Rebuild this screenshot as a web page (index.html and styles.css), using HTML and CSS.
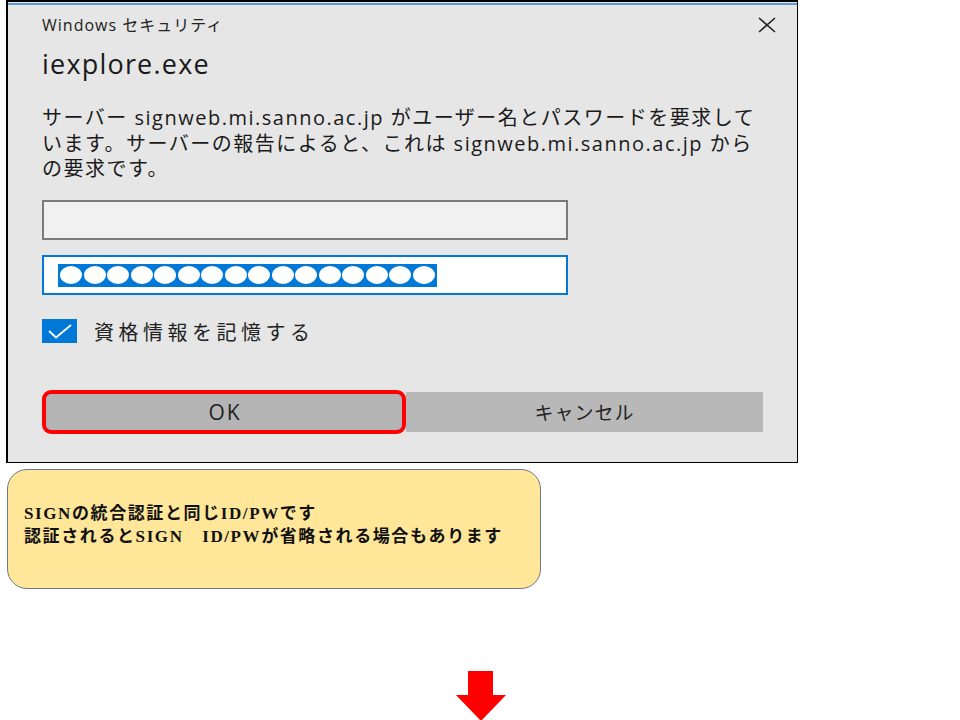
FILE: index.html
```html
<!DOCTYPE html>
<html lang="ja">
<head>
    <meta charset="UTF-8">
    <title>Windows セキュリティ</title>
    <link rel="stylesheet" href="styles.css">
</head>
<body>
    <div class="dialog">
        <div class="accent-line"></div>

        <div class="title-row">
            <span class="dialog-caption">Windows セキュリティ</span>
            <svg class="close-icon" width="18" height="16" viewBox="0 0 18 16">
                <path d="M1 1 L17 15 M17 1 L1 15" stroke="#222" stroke-width="1.6" fill="none"/>
            </svg>
        </div>

        <h1 class="app-name">iexplore.exe</h1>

        <p class="message">
            サーバー signweb.mi.sanno.ac.jp がユーザー名とパスワードを要求して<br>
            います。サーバーの報告によると、これは signweb.mi.sanno.ac.jp から<br>
            の要求です。
        </p>

        <div class="field field-user"></div>
        <div class="field field-pass">
            <div class="selection">
                <span class="dot"></span><span class="dot"></span><span class="dot"></span><span class="dot"></span>
                <span class="dot"></span><span class="dot"></span><span class="dot"></span><span class="dot"></span>
                <span class="dot"></span><span class="dot"></span><span class="dot"></span><span class="dot"></span>
                <span class="dot"></span><span class="dot"></span><span class="dot"></span><span class="dot"></span>
            </div>
        </div>

        <label class="remember">
            <svg class="checkbox" width="35" height="24" viewBox="0 0 35 24">
                <rect width="35" height="24" fill="#0078d7"/>
                <path d="M7 12 L14 18.5 L29 6" stroke="#fff" stroke-width="1.8" fill="none"/>
            </svg>
            <span>資格情報を記憶する</span>
        </label>

        <div class="buttons">
            <div class="btn btn-ok">OK</div>
            <div class="btn btn-cancel">キャンセル</div>
        </div>
    </div>

    <div class="note">
        <p>SIGNの統合認証と同じID/PWです</p>
        <p>認証されるとSIGN　ID/PWが省略される場合もあります</p>
    </div>

    <div class="arrow-row">
        <svg width="52" height="50" viewBox="0 0 52 50">
            <path d="M13 0 H38 V24 H51 L26 50 L1 24 H13 Z" fill="#ff0000"/>
        </svg>
    </div>
</body>
</html>
```

FILE: styles.css
```css
* {
    margin: 0;
    padding: 0;
    box-sizing: border-box;
}

body {
    background: #ffffff;
    font-family: 'Open Sans', 'Noto Sans CJK JP', sans-serif;
    color: #1a1a1a;
    width: 960px;
    height: 720px;
    overflow: hidden;
}

.dialog {
    margin-left: 6px;
    width: 792px;
    height: 463px;
    background: #e6e6e6;
    border: 1px solid #000;
    border-left-width: 2px;
    border-top-width: 2px;
    padding: 0 34px 0 34px;
}

.accent-line {
    height: 2px;
    margin: 1px -34px 0 -34px;
    background: #5b9bd5;
}

.title-row {
    display: flex;
    justify-content: space-between;
    align-items: center;
    height: 28px;
    margin-top: 5px;
}

.dialog-caption {
    font-size: 16px;
    letter-spacing: 1px;
    color: #222;
}

.close-icon {
    margin-right: -13px;
    margin-top: 2px;
}

.app-name {
    font-size: 27px;
    font-weight: normal;
    line-height: 32px;
    margin-top: 10px;
    letter-spacing: 1.2px;
}

.message {
    font-size: 20px;
    line-height: 25.5px;
    margin-top: 25px;
    letter-spacing: 1.5px;
    white-space: nowrap;
}

.field {
    width: 526px;
    height: 40px;
    border: 2px solid #7a7a7a;
    background: #f1f1f1;
}

.field-user {
    margin-top: 18px;
}

.field-pass {
    margin-top: 15px;
    border-color: #0078d7;
    background: #ffffff;
    padding: 7px 0 0 14px;
}

.selection {
    display: inline-flex;
    gap: 1.5px;
    background: #0078d7;
    padding: 2px 2px;
    height: 23px;
    align-items: center;
}

.dot {
    width: 22px;
    height: 18px;
    border-radius: 50%;
    background: #ffffff;
}

.remember {
    display: flex;
    align-items: center;
    gap: 17px;
    margin-top: 22px;
    font-size: 20px;
    letter-spacing: 4.5px;
    color: #222;
}

.buttons {
    display: flex;
    align-items: center;
    margin-top: 44px;
}

.btn {
    display: flex;
    align-items: center;
    justify-content: center;
    font-size: 19px;
    color: #222;
}

.btn-ok {
    width: 364px;
    height: 44px;
    background: #b4b4b4;
    border: 4px solid #ff0000;
    border-radius: 9px;
    font-size: 21px;
    letter-spacing: 2px;
    padding-left: 2px;
}

.btn-cancel {
    width: 357px;
    height: 40px;
    background: #b8b8b8;
    letter-spacing: 1px;
}

.note {
    margin: 6px 0 0 7px;
    width: 534px;
    height: 120px;
    background: #ffe699;
    border: 1px solid #6b7b88;
    border-radius: 20px;
    padding: 32px 0 0 16px;
    font-family: 'Liberation Serif', 'Noto Sans CJK JP', serif;
    font-weight: bold;
    font-size: 17px;
    letter-spacing: 1.6px;
    line-height: 23px;
    color: #111;
}

.arrow-row {
    display: flex;
    padding-left: 455px;
    margin-top: 82px;
}
```
